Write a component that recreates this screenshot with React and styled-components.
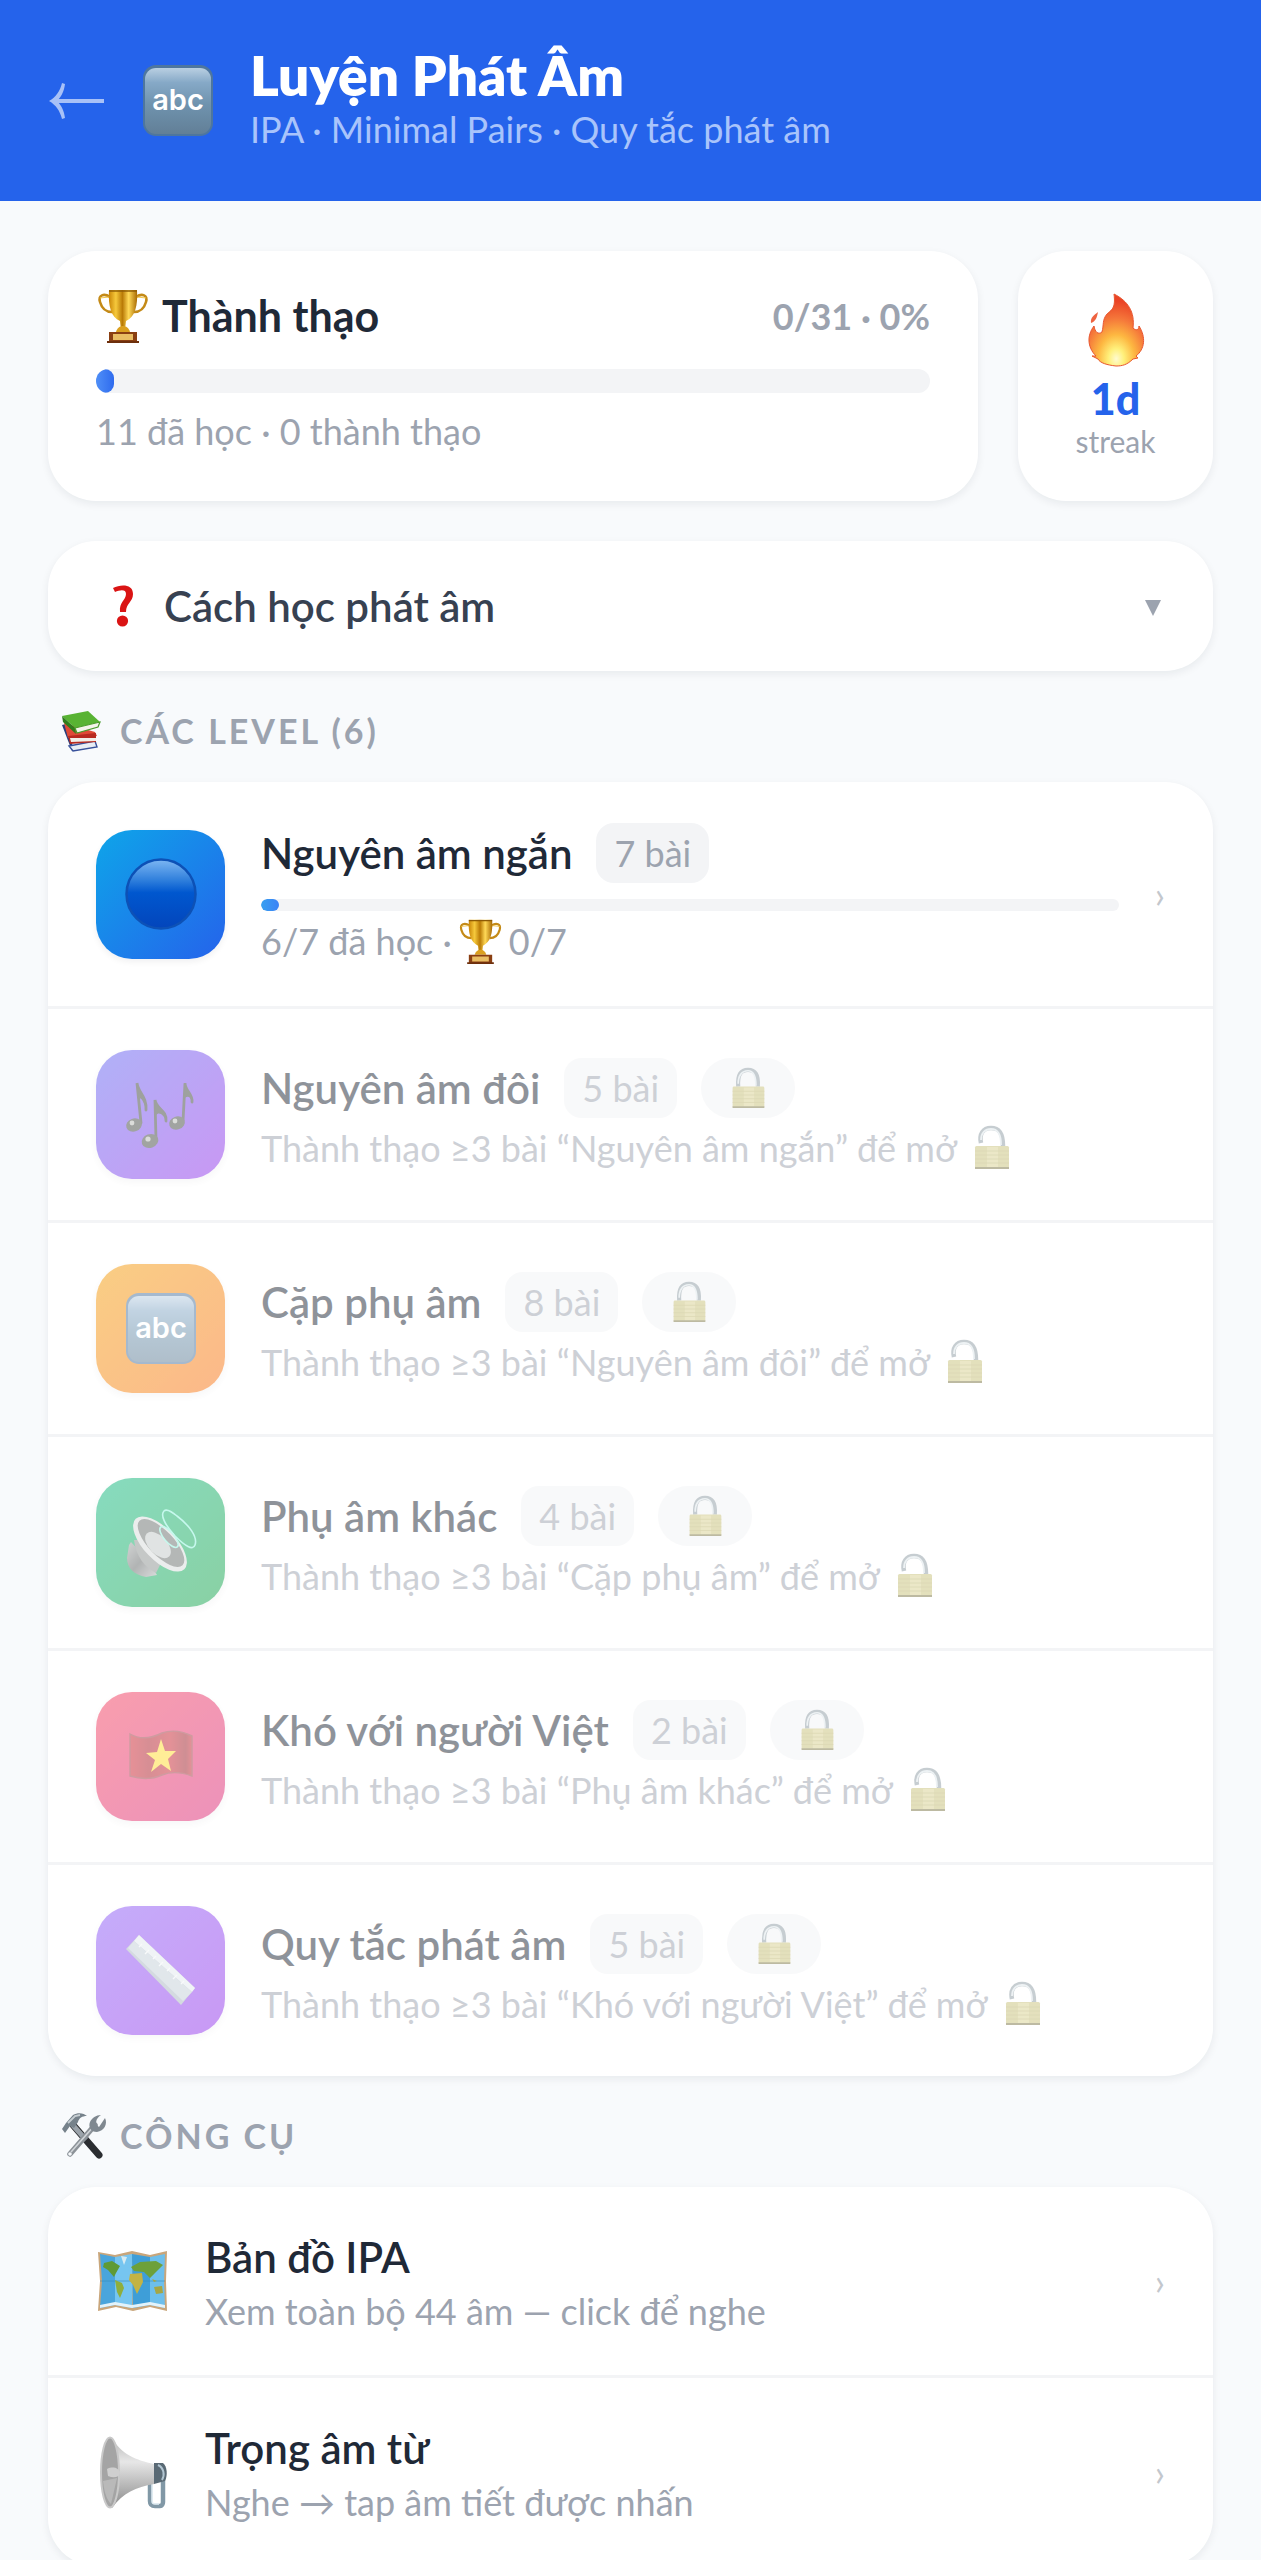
import React from "react";
import styled, { createGlobalStyle, css } from "styled-components";

const GlobalStyle = createGlobalStyle`
  *, *::before, *::after { box-sizing: border-box; }
  body {
    margin: 0;
    background: #f8fafc;
    color: #1f2937;
    font-family: Lato, "Noto Sans", sans-serif;
  }
  h1, h2, p, ul { margin: 0; padding: 0; }
  ul { list-style: none; }
  button { font: inherit; color: inherit; border: 0; background: none; text-align: left; }
  svg { display: block; flex: none; overflow: visible; }
`;

/* ---------- layout ---------- */

const Shell = styled.div`
  height: 100vh;
  display: flex;
  flex-direction: column;
`;

const Header = styled.header`
  flex: none;
  display: flex;
  align-items: center;
  gap: 36px;
  padding: 42px 48px;
  background: #2563eb;
`;

const BackLink = styled.a`
  display: flex;
  color: #a8c1f7;
`;

const HeaderText = styled.div`
  padding-bottom: 9px;
`;

const PageTitle = styled.h1`
  color: #fff;
  font-size: 55px;
  font-weight: 800;
  line-height: 66px;
`;

const PageSubtitle = styled.p`
  color: #a9c4fb;
  font-size: 36px;
  line-height: 42px;
`;

const Main = styled.main`
  flex: 1;
  min-height: 0;
  overflow-y: auto;
  scrollbar-width: none;
  padding: 50px 48px;
`;

const cardSurface = css`
  background: #fff;
  border-radius: 48px;
  box-shadow: 0 3px 9px rgba(15, 23, 42, 0.07);
`;

const StatsRow = styled.section`
  display: flex;
  gap: 40px;
  margin-bottom: 40px;
`;

const MasteryCard = styled.div`
  ${cardSurface}
  flex: 1;
  padding: 38px 48px 48px;
`;

const MasteryHead = styled.div`
  display: flex;
  align-items: center;
  gap: 12px;
  margin-bottom: 26px;
  line-height: 54px;
`;

const MasteryTitle = styled.h2`
  flex: 1;
  font-size: 43px;
  font-weight: 700;
`;

const MasteryScore = styled.span`
  color: #9ca3af;
  font-size: 36px;
  font-weight: 700;
`;

const Track = styled.span`
  display: block;
  height: ${(p) => p.$thickness}px;
  overflow: hidden;
  border-radius: 12px;
  background: #f3f4f6;
`;

const Fill = styled.span`
  display: block;
  height: 100%;
  min-width: 18px;
  border-radius: 12px;
  background: linear-gradient(90deg, ${(p) => p.$from}, ${(p) => p.$to});
`;

const MasteryNote = styled.p`
  margin-top: 16px;
  color: #9ca3af;
  font-size: 36px;
  line-height: 44px;
`;

const StreakCard = styled.div`
  ${cardSurface}
  width: 195px;
  display: flex;
  flex-direction: column;
  align-items: center;
  justify-content: center;
`;

const StreakValue = styled.strong`
  margin-top: 9px;
  color: #2563eb;
  font-size: 43px;
  font-weight: 900;
  line-height: 48px;
`;

const StreakLabel = styled.span`
  color: #9ca3af;
  font-size: 30px;
  line-height: 36px;
`;

const HelpButton = styled.button`
  ${cardSurface}
  width: 100%;
  display: flex;
  align-items: center;
  gap: 12px;
  padding: 38px 52px 38px 48px;
  color: #374151;
  font-size: 42px;
  font-weight: 600;
  line-height: 54px;
`;

const HelpLabel = styled.span`
  flex: 1;
`;

const SectionTitle = styled.h2`
  display: flex;
  align-items: center;
  gap: 12px;
  padding: 36px 0 27px 12px;
  color: #9ca3af;
  font-size: 34px;
  font-weight: 700;
  letter-spacing: 3px;
  line-height: 48px;
  text-transform: uppercase;
`;

const ListCard = styled.ul`
  ${cardSurface}
  overflow: hidden;
`;

const Item = styled.li`
  & + & { border-top: 3px solid ${(p) => (p.$faint ? "#fafafb" : "#f3f4f6")}; }
`;

const LevelButton = styled.button`
  width: 100%;
  display: flex;
  align-items: center;
  gap: 36px;
  padding: 41px 48px;
  opacity: ${(p) => (p.disabled ? 0.5 : 1)};
`;

const LevelTile = styled.span`
  flex: none;
  width: 129px;
  height: 129px;
  display: grid;
  place-items: center;
  border-radius: 36px;
  background: linear-gradient(135deg, ${(p) => p.$from}, ${(p) => p.$to});
  box-shadow: 0 3px 6px rgba(15, 23, 42, 0.06);
`;

const LevelBody = styled.span`
  flex: 1;
  min-width: 0;
  display: flex;
  flex-direction: column;
`;

const LevelHead = styled.span`
  display: flex;
  align-items: center;
  gap: 24px;
  margin-bottom: ${(p) => (p.$spaced ? 16 : 6)}px;
`;

const ItemTitle = styled.span`
  color: #1f2937;
  font-size: 42px;
  font-weight: 600;
  line-height: 60px;
`;

const Badge = styled.span`
  display: flex;
  align-items: center;
  height: 60px;
  padding: 0 ${(p) => (p.$round ? 26 : 18)}px;
  border-radius: ${(p) => (p.$round ? 30 : 18)}px;
  background: #f3f4f6;
  color: #9ca3af;
  font-size: 36px;
`;

const ItemNote = styled.span`
  display: flex;
  align-items: center;
  gap: ${(p) => (p.$tight ? 6 : 12)}px;
  color: #9ca3af;
  font-size: 36px;
  line-height: 48px;
`;

const NoteGap = styled.span`
  height: 6px;
`;

const ToolLink = styled.a`
  display: flex;
  align-items: center;
  gap: 36px;
  padding: 40px 48px;
  text-decoration: none;
`;

const Chevron = styled.span`
  color: #c3c7cd;
  font-size: 36px;
  line-height: 48px;
`;

/* ---------- pictograms ---------- */

function Icon({ size, height, box, children }) {
  return (
    <svg width={size} height={height || size} viewBox={box} fill="none" aria-hidden="true">
      {children}
    </svg>
  );
}

const BackArrow = () => (
  <Icon size={58} height={36} box="0 0 58 36">
    <path d="M6 18H56" stroke="currentColor" strokeWidth="4" />
    <path d="M1 18C8 14 12 8 14 0L17 1C16 9 13 14 9 18C13 22 16 27 17 35L14 36C12 28 8 22 1 18Z" fill="currentColor" />
  </Icon>
);

const Abc = () => (
  <Icon size={72} box="0 0 72 72">
    <defs>
      <linearGradient id="abc-face" x1="0" y1="0" x2="0" y2="1">
        <stop offset="0" stopColor="#b9cfe2" />
        <stop offset="0.22" stopColor="#86a9c7" />
        <stop offset="0.55" stopColor="#6f93ae" />
        <stop offset="1" stopColor="#627f97" />
      </linearGradient>
    </defs>
    <rect x="1" y="0" width="70" height="71" rx="13" fill="#4e769e" />
    <rect x="3" y="3" width="66" height="66" rx="11" fill="url(#abc-face)" />
    <text x="36" y="45" fill="#fff" fontFamily="Inter, sans-serif" fontWeight="600" fontSize="29" textAnchor="middle">abc</text>
  </Icon>
);

const Trophy = ({ size }) => (
  <Icon size={size} box="0 0 54 54">
    <defs>
      <linearGradient id="trophy-gold" x1="0" x2="1" y1="0" y2="0">
        <stop offset="0" stopColor="#c98507" />
        <stop offset="0.25" stopColor="#f6c93c" />
        <stop offset="0.48" stopColor="#b97a06" />
        <stop offset="0.7" stopColor="#ffd957" />
        <stop offset="1" stopColor="#a86a04" />
      </linearGradient>
    </defs>
    <path d="M14 8C8 4 2 6 4 13C6 20 11 23 16 23M40 8C46 4 52 6 50 13C48 20 43 23 38 23" stroke="#c48a17" strokeWidth="2.6" />
    <path d="M13 8L4 9M41 8L50 9" stroke="#f2c74d" strokeWidth="1" />
    <path d="M13 1H41C42 17 39 28 30 32L29 41H25L24 32C15 28 12 17 13 1Z" fill="url(#trophy-gold)" />
    <path d="M13 2H41" stroke="#8c5a05" strokeWidth="1.4" />
    <path d="M20 43C21 39 24 37 27 37S33 39 34 43Z" fill="#dba01f" />
    <path d="M13 43H41V53H13Z" fill="#8a3f12" />
    <path d="M17 45H37V51H17Z" fill="#e9bd63" />
    <path d="M11 52H43V54H11Z" fill="#6d2f0c" />
  </Icon>
);

const Flame = () => (
  <Icon size={56} height={72} box="0 0 56 72">
    <defs>
      <radialGradient id="flame-heat" cx="0.5" cy="0.9" r="0.8">
        <stop offset="0" stopColor="#fffbd0" />
        <stop offset="0.18" stopColor="#fff07a" />
        <stop offset="0.42" stopColor="#fdb741" />
        <stop offset="0.7" stopColor="#f5773a" />
        <stop offset="1" stopColor="#ea4326" />
      </radialGradient>
    </defs>
    <path d="M26 0C40 7 47 18 45 34C48 37 51 36 51 32C58 43 57 55 48 62L50 64L45 65C39 71 34 72 28 72C19 71 12 69 10 65L4 62L8 62C-1 53-1 41 6 32C7 38 10 41 14 38C16 31 14 26 19 20C23 16 28 15 26 0Z" fill="url(#flame-heat)" stroke="#e85630" strokeWidth="1" />
    <path d="M10 18C9 23 8 27 3 29C2 24 6 21 10 18Z" fill="#ee6340" />
  </Icon>
);

const Question = () => (
  <Icon size={56} height={44} box="0 0 56 44">
    <path d="M17 4C25 0 37 0 37 10C37 18 30 19 30 28H24C23 18 30 16 30 10C30 5 24 6 19 8Z" fill="#da1414" />
    <circle cx="26.500" cy="37" r="5.6" fill="#da1414" />
  </Icon>
);

const Triangle = () => (
  <Icon size={16} height={20} box="0 0 16 20">
    <path d="M0 4H16L8 20Z" fill="#9ca3af" />
  </Icon>
);

const Books = () => (
  <Icon size={48} height={44} box="0 0 48 44">
    <path d="M2 16L6 15L14 41L12 42Z" fill="#283d7c" />
    <path d="M9 37L35 32L37 38L13 42Z" fill="#e8edf5" stroke="#37509a" strokeWidth="1.4" />
    <path d="M4 14L35 23L37 27L8 29Z" fill="#e04a37" />
    <path d="M8 27L36 24V33L10 35Z" fill="#b82a20" />
    <path d="M10 29L36 29V32L11 33Z" fill="#f3efe8" />
    <path d="M2 7L28 2L40 13L15 19Z" fill="#58b333" />
    <path d="M2 7L15 19L16 25L3 13Z" fill="#2f7d1c" />
    <path d="M15 19L40 13L38 18L17 24Z" fill="#f3f3ea" stroke="#4a9c2b" strokeWidth="1.2" />
  </Icon>
);

const Tools = () => (
  <Icon size={48} box="0 0 48 48">
    <path d="M13 13L39 43" stroke="#2b2d31" strokeWidth="7" strokeLinecap="round" />
    <path d="M11 11L26 28" stroke="#9ba3aa" strokeWidth="5" />
    <path d="M35 13L10 42" stroke="#8c9298" strokeWidth="5.5" strokeLinecap="round" />
    <path d="M34 14L11 40" stroke="#d1d5d9" strokeWidth="1.6" />
    <circle cx="10" cy="42" r="1.8" fill="#f8fafc" />
    <path d="M41 3C35 7 35 12 39 15L45 6C48 12 44 19 37 20C31 20 28 15 30 10C32 6 36 3 41 3Z" fill="#7f8890" />
    <path d="M2 17L6 11L13 3C18 0 24 1 27 4C22 4 19 6 18 10L14 16L10 14L5 21Z" fill="#76828b" />
    <path d="M8 11L15 4L20 3" stroke="#c7ced3" strokeWidth="1.8" />
  </Icon>
);

const BlueCircle = () => (
  <Icon size={72} box="0 0 72 72">
    <defs>
      <linearGradient id="ball" x1="0" y1="0" x2="0" y2="1">
        <stop offset="0" stopColor="#7db7f3" />
        <stop offset="0.3" stopColor="#2f7fdc" />
        <stop offset="0.48" stopColor="#0057cf" />
        <stop offset="1" stopColor="#0345bb" />
      </linearGradient>
    </defs>
    <circle cx="36" cy="36" r="34.5" fill="url(#ball)" stroke="#0d51b6" strokeWidth="2.5" />
  </Icon>
);

const Notes = () => (
  <Icon size={72} box="0 0 72 72">
    <g stroke="#3f4540" strokeWidth="2.8" strokeLinecap="round">
      <path d="M16 44L12 4C13 14 22 17 21 31" />
      <path d="M31 61L30 21C31 30 42 31 41 42" />
      <path d="M58 42L60 4C60 12 68 15 67 23" />
    </g>
    <path d="M12 4L14 20C15 17 19 22 21 31C22 20 14 15 12 4ZM30 21L31 36C34 32 39 36 41 42C43 31 32 29 30 21ZM60 4L59 20C62 16 66 18 67 23C69 14 61 13 60 4Z" fill="#3f4540" />
    <g fill="#454b46">
      <ellipse cx="9" cy="46" rx="8" ry="6.5" transform="rotate(-20 9 46)" />
      <ellipse cx="25" cy="62" rx="8.5" ry="6.8" transform="rotate(-20 25 62)" />
      <ellipse cx="52" cy="44" rx="8" ry="6.5" transform="rotate(-20 52 44)" />
    </g>
    <g fill="#b9bdb7">
      <circle cx="7" cy="44" r="2.4" />
      <circle cx="23" cy="60" r="2.6" />
      <circle cx="50" cy="42" r="2.4" />
    </g>
  </Icon>
);

const Speaker = () => (
  <Icon size={72} box="0 0 72 72">
    <defs>
      <linearGradient id="magnet" x1="0" y1="0" x2="1" y2="1">
        <stop offset="0" stopColor="#a4a8a8" />
        <stop offset="0.5" stopColor="#666b6b" />
        <stop offset="1" stopColor="#b4b8b8" />
      </linearGradient>
    </defs>
    <path d="M6 35L22 52L32 68L21 70C9 68 2 61 2 51L4 38Z" fill="url(#magnet)" />
    <path d="M9 33L18 33L36 56L31 66C20 60 11 50 9 33Z" fill="#8d9291" />
    <ellipse cx="35" cy="37" rx="35" ry="16" transform="rotate(46 35 37)" fill="#d9dddc" />
    <ellipse cx="36" cy="36" rx="31" ry="12.5" transform="rotate(46 36 36)" fill="#6c7270" />
    <ellipse cx="33" cy="38" rx="16" ry="9" transform="rotate(46 33 38)" fill="#c3c9c8" />
    <g stroke="#8ff2dd" strokeWidth="1.6">
      <ellipse cx="44" cy="30" rx="13" ry="5" transform="rotate(50 44 30)" />
      <path d="M39 4C35 8 40 18 50 29C60 39 68 44 70 38C73 30 64 18 52 9C46 4 41 2 39 4Z" />
    </g>
  </Icon>
);

const Flag = () => (
  <Icon size={72} box="0 0 72 72">
    <defs>
      <linearGradient id="flag-cloth" x1="0" x2="1" y1="0" y2="0">
        <stop offset="0" stopColor="#cf2431" />
        <stop offset="0.3" stopColor="#b0202c" />
        <stop offset="0.65" stopColor="#c92632" />
        <stop offset="0.9" stopColor="#9f202b" />
        <stop offset="1" stopColor="#cc2632" />
      </linearGradient>
    </defs>
    <path d="M5 13C17 20 29 16 37 12C49 8 59 11 67 15V55C56 51 47 50 37 54C26 59 15 58 5 55Z" fill="url(#flag-cloth)" stroke="#a03a44" strokeWidth="1.4" />
    <path d="M36 18L40 30L51 30L43 38L46 50L36 43L26 51L30 39L21 32L32 31Z" fill="#ffdc32" />
  </Icon>
);

const Ruler = () => (
  <Icon size={72} box="0 0 72 72">
    <path d="M14 0L70 53L56 70L1 14Z" fill="#a9b6c2" />
    <path d="M14 0L70 53L67 57L9 6Z" fill="#e2e9ee" />
    <path d="M9 6L67 57L58 66L3 13Z" fill="#c3cfd8" />
    <path d="M17 9L14 12M24 15L20 19M31 21L28 24M38 27L34 31M45 33L42 36M52 40L48 44M59 46L56 49" stroke="#f1f5f7" strokeWidth="1.4" />
  </Icon>
);

const Padlock = ({ size, open }) => (
  <Icon size={size} box="0 0 45 45">
    <path
      d={open ? "M12 18C10 9 14 3 22 3C31 3 34 9 34 21" : "M12 21C11 8 15 3 22.500 3C30 3 34 8 33 21"}
      stroke="#8f9da5"
      strokeWidth="4.5"
    />
    <path
      d={open ? "M12 15C12 8 16 4 22 4C29 4 32 9 32 20" : "M12 18C12 9 16 4 22.500 4C28 4 31 8 31 20"}
      stroke="#dde6ea"
      strokeWidth="1.8"
    />
    <rect x="6" y="21" width="34" height="23" rx="1.5" fill="#c9c27c" />
    <path d="M18 22H29V43H18Z" fill="#d8d190" />
    <path d="M6 26H40M6 30H40M6 34H40M6 38H40" stroke="#b9b16c" strokeWidth="0.8" />
    <path d="M6 42H40V44H6Z" fill="#7d7748" />
  </Icon>
);

const WorldMap = () => (
  <Icon size={73} box="0 0 73 73">
    <path d="M2 7L19 10L36 6L54 10L71 6L70 36L71 66L54 62L37 66L20 62L2 66L4 36Z" fill="#c9a67b" />
    <path d="M4 9L19 12V60L4 63L6 36Z" fill="#4aa5dc" />
    <path d="M19 12L36 9L37 36L36 63L19 60Z" fill="#76c5f0" />
    <path d="M36 9L54 12V60L37 63Z" fill="#3e9ed8" />
    <path d="M54 12L69 9L68 36L69 63L54 60Z" fill="#6dbfec" />
    <path d="M4 36H69" stroke="#3489bd" strokeWidth="1" opacity="0.6" />
    <path d="M4 60L19 57L36 60L54 57L69 60V63L54 60L36 63L19 60L4 63Z" fill="#e3f3fa" />
    <path d="M8 18L16 16L24 21L20 28L18 32L12 25L7 22Z" fill="#5f9a35" />
    <path d="M19 35L26 38L28 43L24 53L21 47Z" fill="#8fae3c" />
    <path d="M25 11L31 12L28 20Z" fill="#d7ebf2" />
    <path d="M35 22L44 17L60 16L67 20L59 28L54 33L48 27L38 26Z" fill="#6da03a" />
    <path d="M34 29L46 28L47 37L41 49L37 40L33 35Z" fill="#c3b344" />
    <path d="M58 42L66 41L67 48L60 49ZM56 34L61 36L58 37Z" fill="#a6a644" />
  </Icon>
);

const Megaphone = () => (
  <Icon size={73} box="0 0 73 73">
    <defs>
      <linearGradient id="horn" x1="0" y1="0" x2="0" y2="1">
        <stop offset="0" stopColor="#b4b4b4" />
        <stop offset="0.35" stopColor="#e7e7e7" />
        <stop offset="1" stopColor="#8a8a8a" />
      </linearGradient>
    </defs>
    <path d="M54 40V65C54 69 56 70 59 70H64C66 70 67 68 67 66V34" stroke="#8198a6" strokeWidth="4.500" />
    <path d="M56 42V65C56 67 57 68 59 68H63" stroke="#e1edf3" strokeWidth="1.500" />
    <path d="M58 27H67C71 30 72 39 69 45L58 48Z" fill="#5a6a75" />
    <path d="M62 29C68 32 69 39 66 44" stroke="#b2c6d2" strokeWidth="2" />
    <path d="M15 1C26 19 40 24 58 28V48C40 51 27 57 16 72Z" fill="url(#horn)" />
    <ellipse cx="14" cy="36.500" rx="9" ry="35" fill="#a4a4a4" stroke="#c9c9c9" strokeWidth="2" />
    <path d="M11 33C17 30 23 32 24 37C23 42 17 42 12 40Z" fill="#cfcfcf" />
    <path d="M7 45L21 42L15 68C10 63 8 54 7 45Z" fill="#b9b9b9" />
  </Icon>
);

/* ---------- data ---------- */

const LEVELS = [
  { title: "Nguyên âm ngắn", lessons: 7, icon: BlueCircle, from: "#0ea5e9", to: "#2563eb", learned: 6, mastered: 0 },
  { title: "Nguyên âm đôi", lessons: 5, icon: Notes, from: "#6366f1", to: "#9333ea" },
  { title: "Cặp phụ âm", lessons: 8, icon: Abc, from: "#f59e0b", to: "#f97316" },
  { title: "Phụ âm khác", lessons: 4, icon: Speaker, from: "#10b981", to: "#16a34a" },
  { title: "Khó với người Việt", lessons: 2, icon: Flag, from: "#f43f5e", to: "#db2777" },
  { title: "Quy tắc phát âm", lessons: 5, icon: Ruler, from: "#8b5cf6", to: "#9333ea" },
];

const TOOLS = [
  { title: "Bản đồ IPA", note: "Xem toàn bộ 44 âm — click để nghe", icon: WorldMap },
  { title: "Trọng âm từ", note: "Nghe → tap âm tiết được nhấn", icon: Megaphone },
];

function Progress({ label, value, max, thickness, from, to }) {
  return (
    <Track
      role="progressbar"
      aria-label={label}
      aria-valuenow={value}
      aria-valuemin={0}
      aria-valuemax={max}
      $thickness={thickness}
    >
      <Fill $from={from} $to={to} style={{ width: `${(value / max) * 100}%` }} />
    </Track>
  );
}

function Level({ level, previous }) {
  const Picture = level.icon;
  const locked = Boolean(previous);
  return (
    <Item $faint>
      <LevelButton type="button" disabled={locked}>
        <LevelTile $from={level.from} $to={level.to}>
          <Picture />
        </LevelTile>
        <LevelBody>
          <LevelHead $spaced={!locked}>
            <ItemTitle>{level.title}</ItemTitle>
            <Badge>{level.lessons} bài</Badge>
            {locked && (
              <Badge $round>
                <Padlock size={42} />
              </Badge>
            )}
          </LevelHead>
          {locked ? (
            <ItemNote>
              Thành thạo ≥3 bài “{previous.title}” để mở
              <Padlock size={45} open />
            </ItemNote>
          ) : (
            <>
              <Progress label={level.title} value={level.mastered} max={level.lessons} thickness={12} from="#38a0f0" to="#3b82f6" />
              <NoteGap />
              <ItemNote $tight>
                {level.learned}/{level.lessons} đã học ·
                <Trophy size={45} />
                {level.mastered}/{level.lessons}
              </ItemNote>
            </>
          )}
        </LevelBody>
        {!locked && <Chevron>›</Chevron>}
      </LevelButton>
    </Item>
  );
}

export default function App() {
  return (
    <Shell>
      <GlobalStyle />
      <Header>
        <BackLink href="#home" aria-label="Quay lại">
          <BackArrow />
        </BackLink>
        <Abc />
        <HeaderText>
          <PageTitle>Luyện Phát Âm</PageTitle>
          <PageSubtitle>IPA · Minimal Pairs · Quy tắc phát âm</PageSubtitle>
        </HeaderText>
      </Header>

      <Main>
        <StatsRow>
          <MasteryCard>
            <MasteryHead>
              <Trophy size={54} />
              <MasteryTitle>Thành thạo</MasteryTitle>
              <MasteryScore>0/31 · 0%</MasteryScore>
            </MasteryHead>
            <Progress label="Thành thạo" value={0} max={31} thickness={24} from="#4f8ff7" to="#2f6bee" />
            <MasteryNote>11 đã học · 0 thành thạo</MasteryNote>
          </MasteryCard>
          <StreakCard>
            <Flame />
            <StreakValue>1d</StreakValue>
            <StreakLabel>streak</StreakLabel>
          </StreakCard>
        </StatsRow>

        <HelpButton type="button" aria-expanded="false">
          <Question />
          <HelpLabel>Cách học phát âm</HelpLabel>
          <Triangle />
        </HelpButton>

        <SectionTitle>
          <Books />
          Các level ({LEVELS.length})
        </SectionTitle>
        <ListCard>
          {LEVELS.map((level, i) => (
            <Level key={level.title} level={level} previous={LEVELS[i - 1]} />
          ))}
        </ListCard>

        <SectionTitle>
          <Tools />
          Công cụ
        </SectionTitle>
        <ListCard>
          {TOOLS.map(({ title, note, icon: Picture }) => (
            <Item key={title}>
              <ToolLink href="#tool">
                <Picture />
                <LevelBody>
                  <ItemTitle>{title}</ItemTitle>
                  <ItemNote>{note}</ItemNote>
                </LevelBody>
                <Chevron>›</Chevron>
              </ToolLink>
            </Item>
          ))}
        </ListCard>
      </Main>
    </Shell>
  );
}
